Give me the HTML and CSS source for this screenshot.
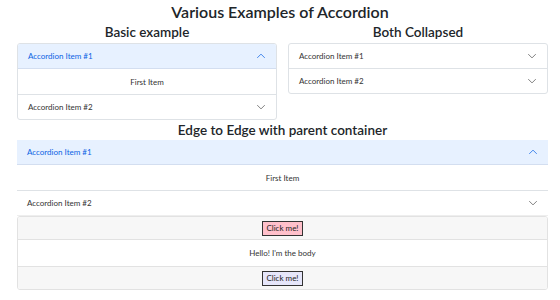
FILE: index.html
```html
<!DOCTYPE html>
<html lang="en">
<head>
  <meta charset="UTF-8" />
  <title>Accordion Examples</title>
  <link rel="stylesheet" href="styles.css">
</head>
<body>
  <h1 class="title">Various Examples of Accordion</h1>

  <div class="row">
    <div class="col">
      <h2>Basic example</h2>
      <div class="accordion">
        <div class="acc-item">
          <div class="acc-btn open">
            <span>Accordion Item #1</span>
            <svg class="chev" viewBox="0 0 16 16"><path d="M2 11l6-6 6 6" /></svg>
          </div>
          <div class="acc-body">First Item</div>
        </div>
        <div class="acc-item">
          <div class="acc-btn">
            <span>Accordion Item #2</span>
            <svg class="chev" viewBox="0 0 16 16"><path d="M2 5l6 6 6-6" /></svg>
          </div>
        </div>
      </div>
    </div>

    <div class="col">
      <h2>Both Collapsed</h2>
      <div class="accordion">
        <div class="acc-item">
          <div class="acc-btn">
            <span>Accordion Item #1</span>
            <svg class="chev" viewBox="0 0 16 16"><path d="M2 5l6 6 6-6" /></svg>
          </div>
        </div>
        <div class="acc-item">
          <div class="acc-btn">
            <span>Accordion Item #2</span>
            <svg class="chev" viewBox="0 0 16 16"><path d="M2 5l6 6 6-6" /></svg>
          </div>
        </div>
      </div>
    </div>
  </div>

  <div class="wide">
    <h2>Edge to Edge with parent container</h2>
    <div class="accordion flush">
      <div class="acc-item">
        <div class="acc-btn open">
          <span>Accordion Item #1</span>
          <svg class="chev" viewBox="0 0 16 16"><path d="M2 11l6-6 6 6" /></svg>
        </div>
        <div class="acc-body">First Item</div>
      </div>
      <div class="acc-item">
        <div class="acc-btn">
          <span>Accordion Item #2</span>
          <svg class="chev" viewBox="0 0 16 16"><path d="M2 5l6 6 6-6" /></svg>
        </div>
      </div>
    </div>

    <div class="card">
      <div class="card-header"><button class="btn pink">Click me!</button></div>
      <div class="card-body">Hello! I'm the body</div>
      <div class="card-footer"><button class="btn lavender">Click me!</button></div>
    </div>
  </div>
</body>
</html>
```

FILE: styles.css
```css
body {
  margin: 0;
  font-family: Lato, "Noto Sans", sans-serif;
  color: #212529;
  background-color: #fff;
}

.title {
  margin: 0;
  padding-top: 2px;
  font-size: 16px;
  font-weight: 600;
  line-height: 20px;
  text-align: center;
}

h2 {
  margin: 0;
  font-size: 13.5px;
  font-weight: 600;
  line-height: 20px;
  text-align: center;
}

.row {
  display: grid;
  grid-template-columns: 1fr 1fr;
  gap: 11px;
  padding: 0 12px 0 17px;
}

.col h2 {
  margin-bottom: 1px;
}

.accordion {
  border: 1px solid #dee2e6;
  border-radius: 3px;
  background-color: #fff;
  overflow: hidden;
}

.acc-item + .acc-item {
  border-top: 1px solid #dee2e6;
}

.acc-btn {
  display: flex;
  justify-content: space-between;
  align-items: center;
  height: 24px;
  padding: 0 10px;
  font-size: 8px;
  color: #333;
}

.acc-btn.open {
  background-color: #e7f1ff;
  color: #0c63e4;
  border-bottom: 1px solid #d3def0;
}

.chev {
  width: 10px;
  height: 10px;
  fill: none;
  stroke: #555;
  stroke-width: 1.2;
}

.acc-btn.open .chev {
  stroke: #0c63e4;
}

.acc-body {
  height: 25px;
  display: flex;
  align-items: center;
  justify-content: center;
  font-size: 8px;
  color: #333;
}

.wide {
  padding: 0 12px 0 17px;
}

.flush {
  border: none;
  border-radius: 0;
  border-bottom: 1px solid #eee;
}

.card {
  border: 1px solid #e2e2e2;
  border-radius: 3px;
  overflow: hidden;
}

.card-header, .card-footer {
  background-color: #f7f7f7;
  height: 22px;
  display: flex;
  align-items: center;
  justify-content: center;
}

.card-header {
  border-bottom: 1px solid #e2e2e2;
}

.card-footer {
  border-top: 1px solid #e2e2e2;
}

.card-body {
  height: 26px;
  display: flex;
  align-items: center;
  justify-content: center;
  font-size: 8px;
  color: #333;
}

.btn {
  font-family: inherit;
  font-size: 8px;
  padding: 1px 3px;
  border: 1px solid #333;
  color: #222;
  line-height: 11px;
}

.btn.pink {
  background-color: #ffc0cb;
}

.btn.lavender {
  background-color: #e6e6fa;
}
```
